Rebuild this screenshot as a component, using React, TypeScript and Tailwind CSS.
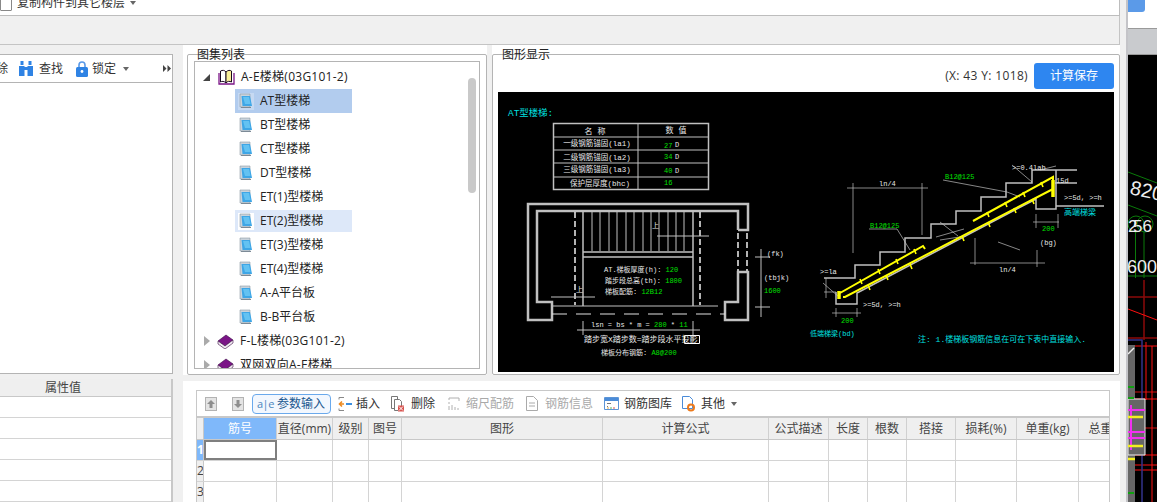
const treeItems = ["AT型楼梯", "BT型楼梯", "CT型楼梯", "DT型楼梯", "ET(1)型楼梯", "ET(2)型楼梯", "ET(3)型楼梯", "ET(4)型楼梯", "A-A平台板", "B-B平台板"];

const columns = [
	{ label: "筋号", w: "w-[73px]" },
	{ label: "直径(mm)", w: "w-[56px]" },
	{ label: "级别", w: "w-[36px]" },
	{ label: "图号", w: "w-[33px]" },
	{ label: "图形", w: "w-[201px]" },
	{ label: "计算公式", w: "w-[166px]" },
	{ label: "公式描述", w: "w-[60px]" },
	{ label: "长度", w: "w-[39px]" },
	{ label: "根数", w: "w-[39px]" },
	{ label: "搭接", w: "w-[49px]" },
	{ label: "损耗(%)", w: "w-[61px]" },
	{ label: "单重(kg)", w: "w-[62px]" },
	{ label: "总重", w: "w-[44px]" },
];

const NoteIcon = () => (
	<svg width="14" height="16" viewBox="0 0 14 16" className="shrink-0">
		<path d="M1 1h10v13H1z" fill="#c9d3dc" stroke="#8d9aa6" strokeWidth="0.6" />
		<path d="M2.500 3h8.500l2 10H3.500z" fill="#3ea6e6" />
		<path d="M4 4h6l1.500 7H6z" fill="#63c2f2" />
		<path d="M2 14.500h10" stroke="#7c8a96" />
	</svg>
);

const PurpleBook = () => (
	<svg width="17" height="15" viewBox="0 0 17 15" className="shrink-0">
		<path d="M1 7 9 1l7 5-8 6z" fill="#7b1587" stroke="#3b0a44" strokeWidth="0.6" />
		<path d="M1 7v3l7 5 8-6V6l-8 6z" fill="#f2eef3" stroke="#3b0a44" strokeWidth="0.6" />
	</svg>
);

const OpenBook = () => (
	<svg width="17" height="16" viewBox="0 0 17 16" className="shrink-0">
		<path d="M2.500 2c2-1 4-1 5.500 1v11c-2-2-4-2-5.500-1z" fill="#fff" stroke="#1a0a20" />
		<path d="M8 3c2-2 4-2 5.500-1v11c-2-1-4-1-5.500 1z" fill="#f8ef9a" stroke="#1a0a20" />
		<path d="M1 4v11h15V4" fill="none" stroke="#7b1587" strokeWidth="1.300" />
	</svg>
);

const Caret = () => <span className="inline-block w-0 h-0 border-x-[3.5px] border-x-transparent border-t-[4px] border-t-[#666]" />;

const GroupBox = ({ title, className, children }: { title: string; className: string; children: React.ReactNode }) => (
	<div className={`relative border border-[#b4b4b4] rounded-[2px] ${className}`}>
		<span className="absolute left-[9px] top-[-9px] leading-[17px] text-[#222]">{title}</span>
		{children}
	</div>
);

const Tree = () => (
	<div className="relative m-[6px] h-[308px] border border-[#b4b4b4] pt-[3px] overflow-hidden">
		<div className="h-[24px] flex items-center pl-[8px]">
			<span className="w-0 h-0 border-l-[7px] border-l-transparent border-b-[7px] border-b-[#444] mr-[8px]" />
			<OpenBook />
			<span className="ml-[6px] tracking-[0.25px] whitespace-nowrap">A-E楼梯(03G101-2)</span>
		</div>
		{treeItems.map((item, i) => (
			<div key={item} className="h-[24px] flex items-center pl-[40px]">
				<div className={`w-[117px] flex items-center pl-[3px] ${i === 0 ? "h-[24px] bg-[#b2ccee]" : i === 5 ? "h-[22px] bg-[#dde8f9]" : "h-[24px]"}`}>
					<div className={`w-[16px] h-[17px] flex items-center justify-center shrink-0 ${i === 0 ? "bg-[#c6d9f2]" : i === 5 ? "bg-white" : ""}`}>
						<NoteIcon />
					</div>
					<span className="ml-[6px] whitespace-nowrap">{item}</span>
				</div>
			</div>
		))}
		{["F-L楼梯(03G101-2)", "双网双向A-E楼梯"].map((item) => (
			<div key={item} className="h-[24px] flex items-center pl-[9px]">
				<span className="w-0 h-0 border-y-[5px] border-y-transparent border-l-[6px] border-l-[#aaa] mr-[7px]" />
				<PurpleBook />
				<span className="ml-[6px] whitespace-nowrap tracking-[0.25px]">{item}</span>
			</div>
		))}
		<div className="absolute left-[273px] top-[16px] w-[8px] h-[115px] rounded-full bg-[#c9c9c9]" />
	</div>
);

const mono = "font-['Liberation_Mono','Noto_Sans_CJK_SC',monospace] text-[7px]";
const mono8 = "font-['Liberation_Mono','Noto_Sans_CJK_SC',monospace] text-[8px]";
const mono75 = "font-['Liberation_Mono','Noto_Sans_CJK_SC',monospace] text-[7.5px]";
const mono9 = "font-['Liberation_Mono','Noto_Sans_CJK_SC',monospace] text-[9.4px]";

const Label = ({ x, y, c = "#e8e8e8", a = "start", size = mono, children }: { x: number; y: number; c?: string; a?: "start" | "middle"; size?: string; children: React.ReactNode }) => (
	<text x={x} y={y} fill={c} textAnchor={a} className={size}>
		{children}
	</text>
);

const steps = [592, 600, 609, 617, 626, 634, 643, 651, 659, 668, 676, 684];
const G = "#00e000";
const C = "#00e0e0";
const Y = "#ffff00";
const W = "#c0c0c0";

const Drawing = () => (
	<svg viewBox="498 92 616 280" width="616" height="280" className="block bg-black">
		<Label x={508} y={116} c={C} size={mono9}>AT型楼梯:</Label>
		<g stroke={W} fill="none">
			<path d="M553.500 123.500h155v66h-155z" strokeWidth="1.500" />
			<path d="M553 137h155M553 150h155M553 163h155M553 177h155M638 123v66" />
		</g>
		<Label x={595} y={134} a="middle" size={mono8}>名 称</Label>
		<Label x={676} y={133} a="middle" size={mono8}>数 值</Label>
		<Label x={597} y={146} a="middle" size={mono75}>一级钢筋锚固(la1)</Label>
		<Label x={597} y={160} a="middle" size={mono75}>二级钢筋锚固(la2)</Label>
		<Label x={597} y={172} a="middle" size={mono75}>三级钢筋锚固(la3)</Label>
		<Label x={600} y={186} a="middle" size={mono75}>保护层厚度(bhc)</Label>
		<Label x={664} y={148} c={G}>27</Label>
		<Label x={664} y={159} c={G}>34</Label>
		<Label x={664} y={173} c={G}>40</Label>
		<Label x={664} y={185} c={G}>16</Label>
		<Label x={675} y={147}>D</Label>
		<Label x={675} y={159}>D</Label>
		<Label x={675} y={173}>D</Label>

		<g stroke={W} fill="none" strokeWidth="2.500">
			<path d="M738 230h10V204H528v116h24v-18h-15V211h201v19" />
			<path d="M738 272h10v48h-23v-18h13z" />
		</g>
		<g stroke="#e0e0e0" fill="none" strokeWidth="1.600">
			<path d="M738 233v38M747 233v38" strokeDasharray="6 3" />
			<path d="M575 212v93M700 212v93" strokeDasharray="6 3" />
		</g>
		<g stroke={W} fill="none">
			<path d="M583 212v94M693 212v94" strokeWidth="1.500" />
			{steps.map((x) => (
				<path key={x} d={`M${x} 212v39`} />
			))}
			<path d="M583 252h110M583 257h110" strokeWidth="1.500" />
			<path d="M552 306h166M657 236h52M551 297h44" />
			<path d="M552 314h173" strokeDasharray="15 9" stroke="#e0e0e0" />
			<path d="M761 249v68M755 257h15M755 307h15" />
			<path d="M583 321v14M693 321v14M577 330h123" />
			<path d="M684.500 335.500h15v8h-15z" stroke="#fff" />
		</g>
		<Label x={652} y={228}>上</Label>
		<Label x={576} y={292}>上</Label>
		<Label x={767} y={256}>(fk)</Label>
		<Label x={764} y={280}>(tbjk)</Label>
		<Label x={764} y={293} c={G}>1600</Label>
		<text x={604} y={272} className={mono}>
			<tspan fill="#e8e8e8">AT.梯板厚度(h): </tspan>
			<tspan fill={G}>120</tspan>
		</text>
		<text x={605} y={283} className={mono}>
			<tspan fill="#e8e8e8">踏步段总高(th): </tspan>
			<tspan fill={G}>1800</tspan>
		</text>
		<text x={605} y={294} className={mono}>
			<tspan fill="#e8e8e8">梯板配筋: </tspan>
			<tspan fill={G}>12B12</tspan>
		</text>
		<text x={591} y={327} className={mono}>
			<tspan fill="#e8e8e8">lsn = bs * m = </tspan>
			<tspan fill={G}>280</tspan>
			<tspan fill="#e8e8e8"> * </tspan>
			<tspan fill={G}>11</tspan>
		</text>
		<Label x={584} y={342} size={mono8}>踏步宽X踏步数=踏步段水平投影</Label>
		<text x={601} y={355} className={mono}>
			<tspan fill="#e8e8e8">梯板分布钢筋: </tspan>
			<tspan fill={G}>A8@200</tspan>
		</text>

		<g stroke={W} fill="none" strokeWidth="1.500">
			<path d="M824 278h31v-13h25v-13h25v-14h26v-14h25v-13h25v-14h25v-14h26v-13h45M1055 183h22" />
			<path d="M836 292v12h21v-11L1036 199v10h20v-39M1056 206h48" />
		</g>
		<g stroke={W} fill="none" strokeWidth="0.700">
			<path d="M847 188h81M853 183v70M922 183v52M970 263h75M975 238v27M1037 250v17" />
			<path d="M943 180l64 12 13 5M869 229h28l13 21" />
			<path d="M1033 222h26M1036 214v14M1058 214v14M832 313h29M836 308v9M857 308v9" />
			<path d="M823 283l16 14M824 292h12M826 278v20M1012 165l20 17M1040 170l16-4M1020 250l-22-8M940 222l18 14M936 237l28-8M940 240l26-4" />
		</g>
		<g stroke={Y} fill="none" strokeWidth="2">
			<path d="M840 293l83-47 2 3M973 221l80-44v10" />
			<path d="M843 297h2l208-108" />
			<path d="M1053 180v17" strokeWidth="3.500" />
			<path d="M839 291v8" strokeWidth="3.500" />
			<path d="M860 279l2 5M878 269l2 5M896 259l2 5M914 249l2 5M987 212l2 5M1005 202l2 5M1023 192l2 5M1041 182l2 5M870 290l-2-5M888 280l-2-5M912 269l-2-5M964 241l-2-5M990 227l-2-5M1016 213l-2-5M1034 204l-2-5" strokeWidth="1.600" />
		</g>
		<Label x={945} y={179} c={G}>B12@125</Label>
		<Label x={870} y={228} c={G}>B12@125</Label>
		<Label x={879} y={186}>ln/4</Label>
		<Label x={999} y={272}>ln/4</Label>
		<Label x={1012} y={170}>&gt;=0.4lab</Label>
		<Label x={1056} y={183}>15d</Label>
		<Label x={1064} y={200}>&gt;=5d, &gt;=h</Label>
		<Label x={1064} y={215} c={C} size={mono8}>高端梯梁</Label>
		<Label x={1042} y={231} c={G}>200</Label>
		<Label x={1040} y={245}>(bg)</Label>
		<Label x={820} y={274}>&gt;=la</Label>
		<Label x={863} y={307}>&gt;=5d, &gt;=h</Label>
		<Label x={841} y={323} c={G}>200</Label>
		<Label x={810} y={336} c={C}>低端梯梁(bd)</Label>
		<Label x={918} y={342} c={C} size={mono8}>注: 1.楼梯板钢筋信息在可在下表中直接输入.</Label>
	</svg>
);

const ToolButton = ({ icon, label, w, muted, gap = "gap-[4px]" }: { icon: React.ReactNode; label: string; w: string; muted?: boolean; gap?: string }) => (
	<div className={`flex items-center shrink-0 whitespace-nowrap ${w} ${gap} ${muted ? "text-[#a9a9a9]" : "text-[#333]"}`}>
		{icon}
		<span>{label}</span>
	</div>
);

const ArrowBox = ({ up }: { up?: boolean }) => (
	<svg width="12" height="14" viewBox="0 0 12 14" className="shrink-0">
		<rect x="0.500" y="0.500" width="11" height="13" fill="#e4e4e4" stroke="#b3b3b3" />
		<path d={up ? "M6 3 2 7h2.500v4h3V7H10z" : "M6 11 2 7h2.500V3h3v4H10z"} fill="#8e8e8e" />
	</svg>
);

const Toolbar = () => (
	<div className="h-[27px] flex items-center pl-[8px] border-b-[2px] border-[#c8c8c8]">
		<ArrowBox up />
		<div className="w-[15px]" />
		<ArrowBox />
		<div className="ml-[8px] mr-[7px] w-[79px] h-[20px] flex items-center pl-[4px] border border-[#6aa9ec] rounded-[4px] bg-[#f2f7fe] text-[#20578f] shrink-0">
			<span className="w-[20px] text-[11px] tracking-[-0.5px] text-[#4c86bd] leading-none whitespace-nowrap">a|e</span>
			<span className="whitespace-nowrap">参数输入</span>
		</div>
		<ToolButton
			w="w-[53px]"
			label="插入"
			icon={
				<svg width="14" height="16" viewBox="0 0 14 16" className="shrink-0">
					<path d="M1 1.500h5M1 14.500h5M1 1.500v2M1 12.500v2" stroke="#888" fill="none" />
					<path d="M6 8H2M4 5.500 1.500 8 4 10.500" stroke="#ec8a22" strokeWidth="1.600" fill="none" />
					<path d="M8 7h6v2H8z" fill="#3b8fe0" />
				</svg>
			}
		/>
		<ToolButton
			w="w-[57px]"
			label="删除"
			gap="gap-[7px]"
			icon={
				<svg width="13" height="16" viewBox="0 0 13 16" className="shrink-0">
					<path d="M.5.500h6v12h-6z" fill="#fff" stroke="#777" />
					<path d="M3.500 3.500h5l2 2v9h-7z" fill="#fff" stroke="#777" />
					<path d="M7 9.500h6v6H7z" fill="#d9534f" />
					<path d="M8 10.500l4 4M12 10.500l-4 4" stroke="#fff" />
				</svg>
			}
		/>
		<ToolButton
			w="w-[78px]"
			muted
			label="缩尺配筋"
			gap="gap-[6px]"
			icon={
				<svg width="12" height="14" viewBox="0 0 12 14" className="shrink-0">
					<path d="M1 1h10M1 1v2M1 5v2M1 9v4M4 8v5M7 10v3M10 11v2M11 1v3" stroke="#b0b0b0" fill="none" />
				</svg>
			}
		/>
		<ToolButton
			w="w-[78px]"
			muted
			label="钢筋信息"
			gap="gap-[7px]"
			icon={
				<svg width="12" height="15" viewBox="0 0 12 15" className="shrink-0">
					<path d="M.5.500h7l4 4v10H.5z" fill="#fff" stroke="#aaa" />
					<path d="M3 7h6M3 10h6" stroke="#aaa" />
				</svg>
			}
		/>
		<ToolButton
			w="w-[78px]"
			label="钢筋图库"
			gap="gap-[5px]"
			icon={
				<svg width="15" height="13" viewBox="0 0 15 13" className="shrink-0">
					<path d="M.5.500h14v12H.5z" fill="#fff" stroke="#5c94d6" />
					<path d="M1 1h13v3H1z" fill="#4a8bd8" />
					<path d="M3 6.500h4M3 9.500h1" stroke="#777" />
					<path d="M3 11h2" stroke="#e2a43b" />
					<path d="M6 11h2" stroke="#5cb85c" />
					<path d="M9 11h2" stroke="#d9534f" />
				</svg>
			}
		/>
		<ToolButton
			w="w-[43px]"
			label="其他"
			gap="gap-[6px]"
			icon={
				<svg width="13" height="16" viewBox="0 0 13 16" className="shrink-0">
					<path d="M.5.500h7l3 3v9H.5z" fill="#fff" stroke="#4a8bd8" />
					<circle cx="9" cy="11.500" r="3" fill="none" stroke="#ec7a1c" strokeWidth="2" />
				</svg>
			}
		/>
		<div className="ml-[6px] flex">
			<Caret />
		</div>
	</div>
);

const Table = () => (
	<div className="overflow-hidden flex-1">
		<div className="flex h-[22px] bg-[#efefef] border-b border-[#c8c8c8] text-[#444]">
			<div className="w-[7px] shrink-0 border-r border-[#c8c8c8]" />
			{columns.map((col, i) => (
				<div
					key={col.label}
					className={`${col.w} shrink-0 flex items-center justify-center whitespace-nowrap border-r border-[#d0d0d0] ${i === 0 ? "bg-[#7fb8fa] text-white" : ""}`}
				>
					{col.label}
				</div>
			))}
		</div>
		{["1", "2", "3"].map((row, r) => (
			<div key={row} className="flex h-[21px] border-b border-[#d4d4d4]">
				<div className={`w-[7px] shrink-0 flex items-center overflow-hidden border-r border-[#c8c8c8] ${r === 0 ? "bg-[#7fb8fa] text-white font-bold" : "bg-[#efefef] text-[#444]"}`}>
					{row}
				</div>
				{columns.map((col, i) => (
					<div key={col.label} className={`${col.w} shrink-0 ${r === 0 && i === 0 ? "border-2 border-[#7f7f7f]" : "border-r border-[#d4d4d4]"}`} />
				))}
			</div>
		))}
	</div>
);

const LeftPanel = () => (
	<div className="w-[173px] shrink-0 flex flex-col pt-[9px]">
		<div className="h-[320px] bg-white border border-l-0 border-[#b4b4b4] flex flex-col">
			<div className="h-[28px] flex items-center border-b border-[#b4b4b4] text-[#333] whitespace-nowrap overflow-hidden">
				<span className="w-[8px] flex justify-end shrink-0">除</span>
				<svg width="16" height="15" viewBox="0 0 16 15" className="ml-[10px] shrink-0">
					<path d="M1 5h5.500v10H1zM9.500 5H15v10H9.500zM2.500 0h3v4h-3zM10.500 0h3v4h-3zM6 6h4v3H6z" fill="#2f83e4" />
				</svg>
				<span className="ml-[5px]">查找</span>
				<svg width="12" height="16" viewBox="0 0 12 16" className="ml-[13px] shrink-0">
					<path d="M3 7V4a3 3 0 0 1 6 0v3" fill="none" stroke="#5b9ae8" strokeWidth="1.600" />
					<rect y="6" width="12" height="10" rx="1.500" fill="#2f83e4" />
					<circle cx="6" cy="10.500" r="1.400" fill="#fff" />
				</svg>
				<span className="ml-[4px]">锁定</span>
				<span className="ml-[7px] flex">
					<Caret />
				</span>
				<svg width="8" height="7" viewBox="0 0 8 7" className="ml-[34px] shrink-0">
					<path d="M0 0l3.500 3.500L0 7zM4.500 0 8 3.500 4.500 7z" fill="#444" />
				</svg>
			</div>
		</div>
		<div className="mt-[5px] border-r-2 border-[#c8c8c8]">
			<div className="h-[18px] bg-[#efefef] border-b border-[#c8c8c8] flex items-center text-[#444] pl-[45px]">
				<span>属性值</span>
			</div>
			{[0, 1, 2, 3, 4].map((r) => (
				<div key={r} className="h-[21px] bg-white border-b border-[#d4d4d4]" />
			))}
		</div>
	</div>
);

const CadStrip = () => (
	<div className="w-[29px] shrink-0 flex flex-col">
		<div className="h-[28px] bg-white">
			<div className="w-[17px] h-[12px] bg-[#5b9ae8] rounded-br-[3px]" />
		</div>
		<div className="h-[27px] bg-[#c9cbce] border-y border-[#9a9a9a]" />
		<svg viewBox="1128 55 29 447" width="29" height="447" className="block bg-black">
			<g fill="none" stroke="#0a7a0a">
				<path d="M1128 172l29 11M1128 205l29 11M1135.500 232v46M1144 232v46M1128 276h29" />
				<circle cx="1136" cy="224" r="8" />
				<circle cx="1145" cy="224" r="8" />
			</g>
			<text x={1129} y={194} fill="#eee" transform="rotate(12 1129 194)" className="font-['Liberation_Sans',sans-serif] text-[20px]">820,</text>
			<text x={1128} y={232} fill="#eee" className="font-['Liberation_Sans',sans-serif] text-[17px]">2</text>
			<text x={1133} y={232} fill="#eee" className="font-['Liberation_Sans',sans-serif] text-[17px]">56</text>
			<text x={1127} y={273} fill="#eee" className="font-['Liberation_Sans',sans-serif] text-[18px]">600</text>
			<g fill="none" stroke="#8a0a0a">
				<path d="M1128 297h29M1128 338h29M1144 280v60M1128 392h29M1128 428h29" strokeWidth="1.500" />
			</g>
			<g fill="none" stroke="#ff1010">
				<path d="M1128 309l29 11M1128 346h29M1146 342v58M1152 346v156M1128 399h29M1128 455h29M1128 465h29M1135 470h22" />
			</g>
			<path d="M1128 340h14v162" fill="none" stroke="#33338a" strokeWidth="1.500" />
			<path d="M1128 345h7v157h-7z" fill="#666" />
			<path d="M1128 399h17v56h-17z" fill="#666" stroke="#eee" />
			<g fill="none">
				<path d="M1131 405v45M1128 410h17M1128 432h17M1128 438h17" stroke="#f030f0" strokeWidth="2" />
				<path d="M1128 417h15M1128 446h15M1128 459h7" stroke="#f4f020" strokeWidth="2.500" />
				<path d="M1128 387h6M1128 398h6M1128 493h6" stroke="#10a010" strokeWidth="2" />
				<path d="M1128 354l6-6" stroke="#eee" strokeWidth="1.500" />
			</g>
		</svg>
	</div>
);

export default function App() {
	return (
		<div className="w-[1157px] h-[502px] flex overflow-hidden bg-[#f0f0f0] text-[12px] text-[#222] font-['Open_Sans','Noto_Sans_CJK_SC',sans-serif]">
			<div className="w-[1128px] shrink-0 flex flex-col border-r-2 border-[#c4c4c8]">
				<div className="h-[16px] w-[1120px] shrink-0 bg-white border-b border-r border-[#bdbdbd] overflow-hidden flex items-center text-[#333] whitespace-nowrap">
					<div className="flex items-center mt-[-24px]">
						<div className="w-[12px] h-[20px] border border-[#888] rounded-b-[1px] mt-[10px]" />
						<span className="ml-[5px] mt-[14px]">复制构件到其它楼层</span>
						<span className="ml-[5px] mt-[14px] flex">
							<Caret />
						</span>
					</div>
				</div>
				<div className="h-[29px] w-[1120px] shrink-0 border-b border-[#c4c4c4] border-r" />
				<div className="flex flex-1 min-h-0">
					<LeftPanel />
					<div className="w-[947px] ml-[10px] flex flex-col">
						<div className="h-[330px] flex">
							<div className="w-[304px] bg-white pl-[4px] pt-[9px]">
								<GroupBox title="图集列表" className="h-[321px] bg-white">
									<Tree />
								</GroupBox>
							</div>
							<div className="w-[5px]" />
							<div className="w-[628px] bg-white pt-[9px]">
								<GroupBox title="图形显示" className="h-[321px]">
									<div className="h-[37px] flex items-center justify-end gap-[6px] pr-[5px] pt-[5px]">
										<span className="text-[#333] tracking-[0.35px]">(X: 43 Y: 1018)</span>
										<div className="w-[80px] h-[26px] rounded-[3px] bg-[#2e86f0] text-white flex items-center justify-center">计算保存</div>
									</div>
									<div className="mx-[5px]">
										<Drawing />
									</div>
								</GroupBox>
							</div>
						</div>
						<div className="h-[6px]" />
						<div className="flex-1 w-[937px] bg-white pl-[13px] pr-[10px] pt-[9px] min-h-0">
							<div className="h-full border border-[#c8c8c8] border-b-0 flex flex-col">
								<Toolbar />
								<Table />
							</div>
						</div>
					</div>
				</div>
			</div>
			<CadStrip />
		</div>
	);
}
